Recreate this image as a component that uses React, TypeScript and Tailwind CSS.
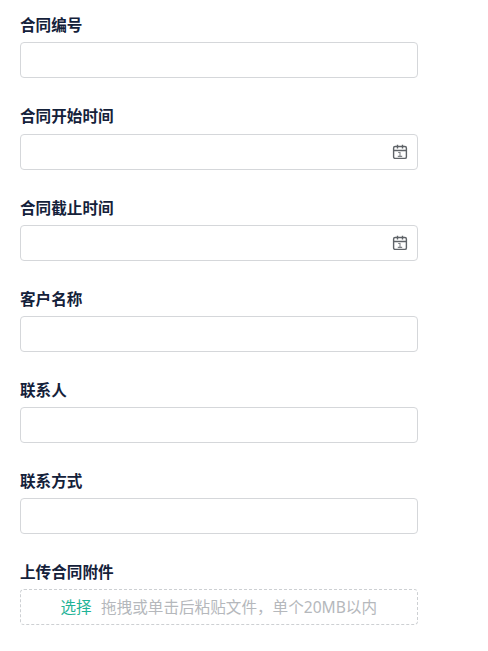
import React from 'react';

interface Field {
    name: string;
    label: string;
    type: 'text' | 'date' | 'upload';
}

const FIELDS: Field[] = [
    { name: 'code', label: '合同编号', type: 'text' },
    { name: 'start', label: '合同开始时间', type: 'date' },
    { name: 'end', label: '合同截止时间', type: 'date' },
    { name: 'customer', label: '客户名称', type: 'text' },
    { name: 'contact', label: '联系人', type: 'text' },
    { name: 'phone', label: '联系方式', type: 'text' },
    { name: 'attachment', label: '上传合同附件', type: 'upload' },
];

function CalendarIcon() {
    return (
        <svg className="w-4 h-4 shrink-0 text-[#5f6368]" viewBox="0 0 16 16" fill="none" stroke="currentColor" strokeWidth="1.4">
            <rect x="1.6" y="2.5" width="12.8" height="11.9" rx="1.5" />
            <path d="M1.6 6.5h12.8M5.5 0.8v3.8M10.5 0.8v3.8" />
            <path d="M6.2 8.5H8v4M5.8 12.4h4.4" strokeWidth="1.1" opacity="0.8" />
        </svg>
    );
}

function FieldControl({ field }: { field: Field }) {
    if (field.type === 'upload') {
        return (
            <div className="flex h-9 items-center justify-center gap-[9.4px] rounded border border-dashed border-[#cdd0d3] pt-0.5 pr-[0.5px] whitespace-nowrap">
                <button type="button" className="text-[#1fb397]">选择</button>
                <span className="text-[#b5b8bc]">拖拽或单击后粘贴文件，单个20MB以内</span>
            </div>
        );
    }

    return (
        <div className="flex h-9 items-center rounded border border-[#d5d7da] pl-3 pr-[9px]">
            <input id={field.name} type="text" className="min-w-0 flex-1 bg-transparent outline-none" />
            {field.type === 'date' && <CalendarIcon />}
        </div>
    );
}

export default function App() {
    return (
        <form className="min-h-screen bg-white pl-5 pt-[14.38px] font-['Noto_Sans','Noto_Sans_CJK_SC',sans-serif] text-[15.6px]">
            <div className="flex w-[398px] flex-col gap-[26.98px]">
                {FIELDS.map(field => (
                    <div key={field.name} className="flex flex-col gap-[6.12px]">
                        <label htmlFor={field.name} className="h-[22px] font-bold leading-[22px] text-[#14213a]">
                            {field.label}
                        </label>
                        <FieldControl field={field} />
                    </div>
                ))}
            </div>
        </form>
    );
}
